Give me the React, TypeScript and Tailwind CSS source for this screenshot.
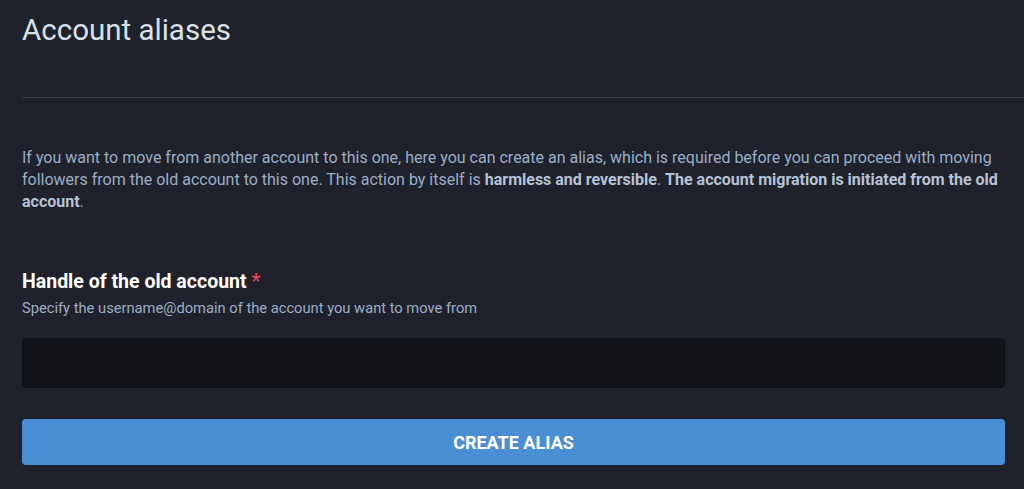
export default function App() {
  return (
    <div className="min-h-screen bg-[#1f222b] pl-[22px] pr-[19px] font-['Roboto','Liberation_Sans',sans-serif]">
      <h2 className="pt-[12px] text-[29.5px] leading-[36px] font-normal text-[#d9e1e8]">Account aliases</h2>
      <div className="mt-[49px] -mr-[19px] h-px bg-[#393d49]" />
      <p className="mt-[49px] text-[16px] leading-[22px] text-[#9baec8]">
        If you want to move from another account to this one, here you can create an alias, which is required before you can proceed with moving followers from the old account to this one. This action by itself is{" "}
        <strong className="font-bold text-[#b5c3d6]">harmless and reversible</strong>.{" "}
        <strong className="font-bold text-[#b5c3d6]">The account migration is initiated from the old account</strong>.
      </p>
      <div className="mt-[57px]">
        <label className="block text-[19.5px] leading-[24px] font-bold text-white">
          Handle of the old account <span className="text-[#df405a]">*</span>
        </label>
        <p className="mt-[4px] text-[14.7px] leading-[20px] text-[#9baec8]">Specify the username@domain of the account you want to move from</p>
        <input type="text" className="mt-[20px] block w-full h-[50px] rounded-[4px] border border-[#0e0f12] bg-[#131419] px-3 text-white outline-none" />
      </div>
      <button type="button" className="mt-[31px] w-full h-[46px] rounded-[4px] bg-[#4a8ed4] text-[18px] font-bold uppercase text-white">
        Create alias
      </button>
    </div>
  )
}
